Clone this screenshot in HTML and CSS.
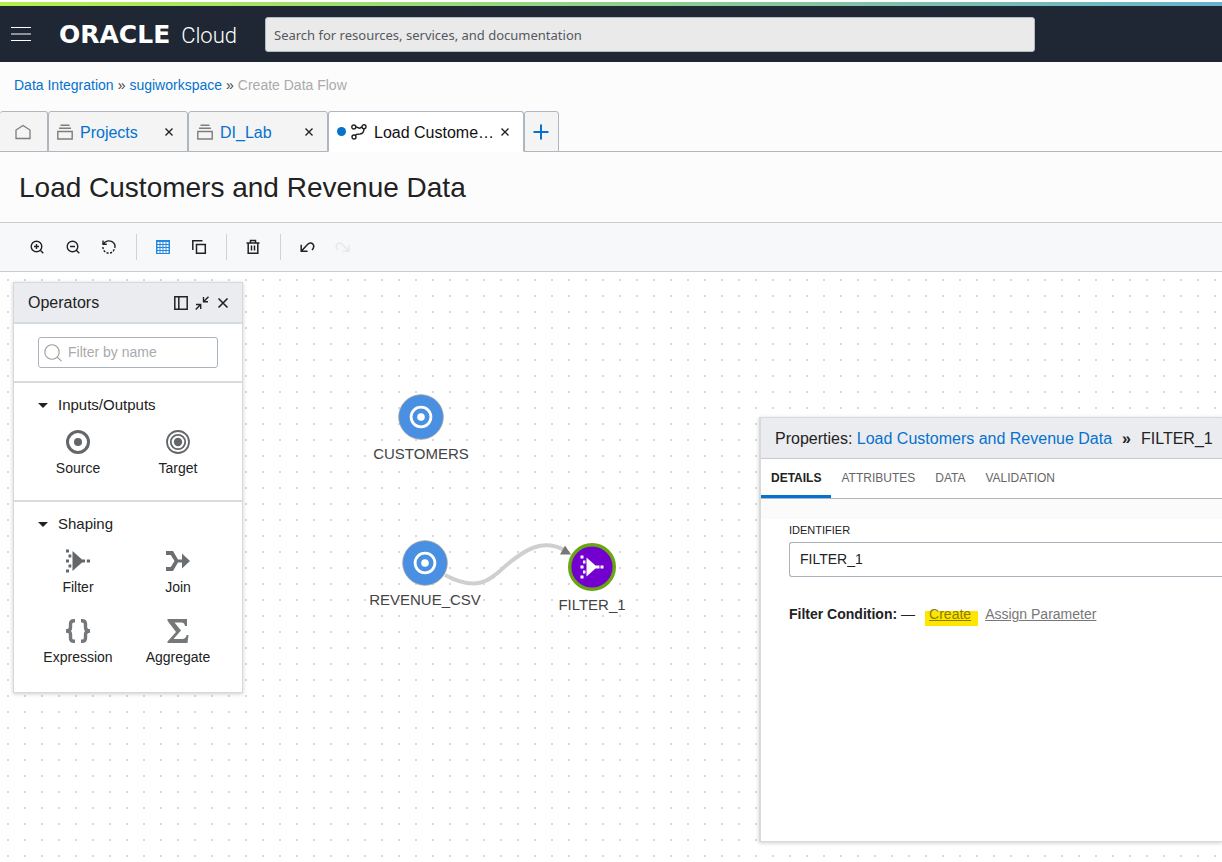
FILE: index.html
```html
<!DOCTYPE html>
<html lang="en">
<head>
<meta charset="UTF-8">
<meta name="viewport" content="width=device-width, initial-scale=1.0">
<title>Create Data Flow</title>
<link rel="stylesheet" href="styles.css">
</head>
<body>
  <header class="topbar">
    <button type="button" class="menu-button" aria-label="Menu"><span></span><span></span><span></span></button>
    <a href="#" class="brand"><span class="brand-name">ORACLE</span><span class="brand-product">Cloud</span></a>
    <input type="text" class="search" aria-label="Search" placeholder="Search for resources, services, and documentation">
  </header>

  <nav class="breadcrumb" aria-label="Breadcrumb">
    <a href="#">Data Integration</a><span class="sep">»</span><a href="#">sugiworkspace</a><span class="sep">»</span><span class="current">Create Data Flow</span>
  </nav>

  <div class="tabs">
    <button type="button" class="tab tab-home" aria-label="Home">
      <svg width="16" height="16" viewBox="0 0 16 16" fill="none" stroke="#7d7d7d" stroke-width="1.3"><path d="M1 14.5V6L8 1.5L15 6V14.5Z"/></svg>
    </button>
    <div class="tab">
      <svg width="16" height="16" viewBox="0 0 16 16" fill="none" stroke="#7d7d7d" stroke-width="1.4"><path d="M3.5 1.2h9M2 4.2h12M.8 7.5h14.4v7.5H.8z"/></svg>
      <a href="#">Projects</a>
      <button type="button" class="close" aria-label="Close Projects"><svg width="8" height="8" viewBox="0 0 8 8" stroke="#222" stroke-width="1.4"><path d="M.5.5l7 7M7.5.5l-7 7"/></svg></button>
    </div>
    <div class="tab">
      <svg width="16" height="16" viewBox="0 0 16 16" fill="none" stroke="#7d7d7d" stroke-width="1.4"><path d="M3.5 1.2h9M2 4.2h12M.8 7.5h14.4v7.5H.8z"/></svg>
      <a href="#">DI_Lab</a>
      <button type="button" class="close" aria-label="Close DI_Lab"><svg width="8" height="8" viewBox="0 0 8 8" stroke="#222" stroke-width="1.4"><path d="M.5.5l7 7M7.5.5l-7 7"/></svg></button>
    </div>
    <div class="tab tab-active">
      <span class="unsaved"></span>
      <svg width="16" height="16" viewBox="0 0 16 16" fill="none" stroke="#222" stroke-width="1.4"><circle cx="2.8" cy="3" r="2"/><circle cx="13" cy="2.8" r="2"/><circle cx="3" cy="13" r="2"/><path d="M4.8 3c2 0 2.4 1.2 3.6 1.2S9.600 3 11 3M13 4.8c0 3-1.5 5-4 5.200-2.5.1-4 .2-4.800 1.5"/></svg>
      <a href="#">Load Custome…</a>
      <button type="button" class="close" aria-label="Close Load Customers"><svg width="8" height="8" viewBox="0 0 8 8" stroke="#222" stroke-width="1.4"><path d="M.5.5l7 7M7.5.5l-7 7"/></svg></button>
    </div>
    <button type="button" class="tab tab-add" aria-label="New tab">
      <svg width="16" height="16" viewBox="0 0 16 16" stroke="#0572ce" stroke-width="2"><path d="M8 .5v15M.5 8h15"/></svg>
    </button>
  </div>

  <h1 class="page-title">Load Customers and Revenue Data</h1>

  <div class="toolbar">
    <button type="button" aria-label="Zoom in"><svg width="16" height="16" viewBox="0 0 16 16" fill="none" stroke="#222" stroke-width="1.4"><circle cx="7.5" cy="7.5" r="5.3"/><path d="M11.3 11.3l3 3M5 7.5h5M7.5 5v5"/></svg></button>
    <button type="button" aria-label="Zoom out"><svg width="16" height="16" viewBox="0 0 16 16" fill="none" stroke="#222" stroke-width="1.4"><circle cx="7.5" cy="7.5" r="5.3"/><path d="M11.3 11.3l3 3M5 7.5h5"/></svg></button>
    <button type="button" aria-label="Reset"><svg width="16" height="16" viewBox="0 0 16 16" fill="none" stroke="#222" stroke-width="1.4"><path d="M2 1.500v3.800h3.800M2.200 5.300C4 2 8 1 11 2.700c2.500 1.500 3.500 3.800 2.800 6.300"/><path d="M13.300 10.300C11.500 14 8 15 5 13.500 3.200 12.500 2 10.500 1.900 8" stroke-dasharray="2.2 1.4"/></svg></button>
    <span class="divider"></span>
    <button type="button" aria-label="Grid"><svg width="16" height="16" viewBox="0 0 16 16"><path fill="#2389dd" d="M1 1h14v14H1z"/><path stroke="#fff" stroke-width="2" stroke-dasharray="2 1" d="M2.500 4h11M2.500 7h11M2.500 10h11M2.500 13h11"/></svg></button>
    <button type="button" aria-label="Copy"><svg width="16" height="16" viewBox="0 0 16 16" fill="none" stroke="#222" stroke-width="1.5"><path d="M5.500 5.500h8.800v8.800H5.500zM1.800 11V1.800h9.700"/></svg></button>
    <span class="divider"></span>
    <button type="button" aria-label="Delete"><svg width="16" height="16" viewBox="0 0 16 16" fill="none" stroke="#222" stroke-width="1.5"><path d="M1.500 4h13M5.500 4V1.500h5V4M3.200 4v10.200h9.600V4M6.500 6.500v5M9.500 6.500v5"/></svg></button>
    <span class="divider"></span>
    <button type="button" aria-label="Undo"><svg width="16" height="16" viewBox="0 0 16 16" fill="none" stroke="#222" stroke-width="1.5"><path d="M2.200 5.800v6.400h6.400M2.500 12L8 6c2-2.300 4.500-2.500 6-.7 1.300 1.800 1 3.600-1 5.700"/></svg></button>
    <button type="button" aria-label="Redo" disabled><svg width="16" height="16" viewBox="0 0 16 16" fill="none" stroke="#e6e8ea" stroke-width="1.5"><path d="M13.800 5.800v6.400H7.400M13.500 12L8 6C6 3.700 3.500 3.500 2 5.300.7 7.100 1 8.900 3 11"/></svg></button>
  </div>

  <main class="canvas">
    <svg class="links" width="640" height="400" viewBox="0 0 640 400" fill="none">
      <path d="M445 303C482 323 494 303 509 291C524 279 542 266 564 278" stroke="#cfcfcf" stroke-width="4"/>
      <path d="M560 282.500L565 273.500L571 282.500Z" fill="#777"/>
    </svg>

    <div class="node node-customers">
      <svg width="46" height="46" viewBox="0 0 46 46"><circle cx="23" cy="23" r="22.3" fill="#4a90e2" stroke="#a0a0a0" stroke-width=".8"/><circle cx="23" cy="23" r="9.9" fill="none" stroke="#fff" stroke-width="2.8"/><circle cx="23" cy="23" r="3.8" fill="#fff"/></svg>
      <span>CUSTOMERS</span>
    </div>
    <div class="node node-revenue">
      <svg width="46" height="46" viewBox="0 0 46 46"><circle cx="23" cy="23" r="22.3" fill="#4a90e2" stroke="#a0a0a0" stroke-width=".8"/><circle cx="23" cy="23" r="9.9" fill="none" stroke="#fff" stroke-width="2.8"/><circle cx="23" cy="23" r="3.8" fill="#fff"/></svg>
      <span>REVENUE_CSV</span>
    </div>
    <div class="node node-filter">
      <svg width="48" height="48" viewBox="0 0 48 48"><circle cx="24" cy="24" r="22.3" fill="#7300cf" stroke="#68a612" stroke-width="3.4"/><path fill="#fff" d="M18.500 14.500l9 8h4v3h-4l-9 8zM12.500 12.500h3v3h-3zM12.500 22.500h3v3h-3zM12.500 32.500h3v3h-3zM15 17.500h2.500v3H15zM15 27.500h2.500v3H15zM32.500 22.500h3v3h-3z"/></svg>
      <span>FILTER_1</span>
    </div>

    <section class="operators">
      <div class="panel-header">
        <h2>Operators</h2>
        <button type="button" aria-label="Dock"><svg width="14" height="14" viewBox="0 0 14 14" fill="none" stroke="#222" stroke-width="1.5"><path d="M.8.8h12.400v12.400H.8zM4.800 1v12"/></svg></button>
        <button type="button" aria-label="Collapse"><svg width="14" height="14" viewBox="0 0 14 14" fill="none" stroke="#222" stroke-width="1.4"><path d="M8.500 1v4.700H13M9 5.200L13.500.7M1 8.500h4.700V13M5.200 9L.7 13.500"/></svg></button>
        <button type="button" aria-label="Close"><svg width="14" height="14" viewBox="0 0 14 14" stroke="#222" stroke-width="1.6"><path d="M2.500 2.500l9 9M11.500 2.500l-9 9"/></svg></button>
      </div>
      <div class="filter-section">
        <div class="filter-box">
          <svg width="18" height="18" viewBox="0 0 18 18" fill="none" stroke="#9a9a9a" stroke-width="1.1"><circle cx="8" cy="8" r="7.2"/><path d="M13.200 13.200l4.300 4"/></svg>
          <input type="text" aria-label="Filter by name" placeholder="Filter by name">
        </div>
      </div>
      <div class="group">
        <h3><button type="button"><span class="caret"></span>Inputs/Outputs</button></h3>
        <div class="items">
          <div class="item"><svg width="24" height="24" viewBox="0 0 24 24"><circle cx="12" cy="12" r="10.5" fill="none" stroke="#63676a" stroke-width="3"/><circle cx="12" cy="12" r="4" fill="#63676a"/></svg><span>Source</span></div>
          <div class="item"><svg width="24" height="24" viewBox="0 0 24 24"><g fill="none" stroke="#63676a" stroke-width="1.8"><circle cx="12" cy="12" r="11"/><circle cx="12" cy="12" r="7.2"/></g><circle cx="12" cy="12" r="4.2" fill="#63676a"/></svg><span>Target</span></div>
        </div>
      </div>
      <div class="group group-last">
        <h3><button type="button"><span class="caret"></span>Shaping</button></h3>
        <div class="items">
          <div class="item"><svg width="24" height="24" viewBox="0 0 24 24" fill="#63676a"><path d="M6.500 2l9.500 8.500h3v3h-3L6.500 22zM0 .5h3v3H0zM0 10.500h3v3H0zM0 20.500h3v3H0zM2.500 5.500h2.800v3H2.500zM2.500 15.500h2.800v3H2.500zM20.800 10.500H24v3h-3.200z"/></svg><span>Filter</span></div>
          <div class="item"><svg width="24" height="24" viewBox="0 0 24 24" fill="#6b6f72"><path d="M0 2h7l5 8.500h4V4.500l8 7.500-8 7.500v-6h-4L7 22H0v-4h4.800L8.500 12 4.800 6H0z"/></svg><span>Join</span></div>
          <div class="item"><svg width="24" height="24" viewBox="0 0 24 24" fill="none" stroke="#75787b" stroke-width="3.4"><path d="M9 1.700H8C5.200 1.700 4.500 3 4.500 5v3.500c0 2-1 3.500-4.500 3.500 3.500 0 4.500 1.500 4.500 3.500V19c0 2 .7 3.300 3.500 3.300h1M15 1.700h1c2.800 0 3.500 1.300 3.500 3.300v3.500c0 2 1 3.500 4.500 3.500-3.500 0-4.500 1.500-4.500 3.500V19c0 2-.7 3.300-3.500 3.300h-1"/></svg><span>Expression</span></div>
          <div class="item"><svg width="24" height="24" viewBox="0 0 24 24"><path fill="#75787b" d="M1.500 0h19.500v7h-2c-.5-2.500-1.500-3.500-4-3.500H8.500l6.500 8-7.500 8.500h8.500c3 0 4-1.500 4.700-4h1.800L21.500 24h-20v-1.500L10 13 1.500 1.800z"/></svg><span>Aggregate</span></div>
        </div>
      </div>
    </section>

    <section class="properties">
      <div class="properties-header">
        <span>Properties: <a href="#">Load Customers and Revenue Data</a></span><b>»</b><span>FILTER_1</span>
      </div>
      <div class="properties-tabs">
        <button type="button" class="selected">DETAILS</button>
        <button type="button">ATTRIBUTES</button>
        <button type="button">DATA</button>
        <button type="button">VALIDATION</button>
      </div>
      <div class="strip"></div>
      <div class="properties-body">
        <label for="identifier">IDENTIFIER</label>
        <input type="text" id="identifier" value="FILTER_1">
        <div class="condition">
          <strong>Filter Condition:</strong><span>—</span>
          <a href="#" class="create">Create</a>
          <a href="#">Assign Parameter</a>
        </div>
      </div>
    </section>
  </main>
</body>
</html>
```
FILE: styles.css
```css
* {
  box-sizing: border-box;
}
body {
  margin: 0;
  min-height: 100vh;
  display: flex;
  flex-direction: column;
  background-color: #fcfcfc;
  color: #222;
  font-family: "Liberation Sans", Arial, sans-serif;
  font-size: 14px;
  overflow-x: hidden;
}
button {
  font-family: inherit;
  padding: 0;
  border: none;
  background: none;
  color: inherit;
  cursor: pointer;
}
input {
  font-family: inherit;
  color: #222;
}
a {
  color: #0572ce;
  text-decoration: none;
}
svg {
  display: block;
  flex-shrink: 0;
}

/* top bar */
.topbar {
  display: flex;
  align-items: center;
  height: 62px;
  padding: 6px 0 0 11px;
  background: linear-gradient(90deg, #b6ee4a, #69b1cd) 0 2px / 100% 4px no-repeat,
    linear-gradient(#fff 2px, #1e2733 2px);
}
.menu-button {
  display: flex;
  flex-direction: column;
  justify-content: space-between;
  width: 20px;
  height: 14px;
}
.menu-button span {
  height: 1px;
  background-color: #fff;
}
.menu-button span:nth-child(2) {
  height: 2px;
  background-color: #8e9399;
}
.brand {
  display: flex;
  align-items: baseline;
  justify-content: space-between;
  width: 178px;
  margin: 0 28px;
  color: #fff;
}
.brand-name {
  font: bold 25px "DejaVu Sans", sans-serif;
}
.brand-product {
  font: 300 22px Roboto, sans-serif;
}
.search {
  width: 63vw;
  height: 35px;
  padding: 1px 8px 0;
  border: 1px solid #b4bac2;
  border-radius: 3px;
  background-color: #eaeaea;
  font: 13px "Noto Sans", sans-serif;
}
.search::placeholder {
  color: #55595e;
  opacity: 1;
}

.breadcrumb {
  height: 49px;
  padding: 0 14px;
  line-height: 47px;
}
.breadcrumb .sep {
  margin: 0 4px;
  color: #444;
}
.breadcrumb .current {
  color: #aaa;
}

/* workspace tabs */
.tabs {
  display: flex;
  height: 41px;
  box-shadow: inset 0 -1px #b0b6bf;
}
.tab {
  display: flex;
  align-items: center;
  width: 140px;
  padding: 0 14px 0 8px;
  border: 1px solid #b0b6bf;
  border-radius: 3px 3px 0 0;
  background-color: #f4f4f4;
  font-size: 16px;
}
.tab a {
  margin: 0 auto 0 7px;
  padding-top: 2px;
}
.tab-home {
  width: 48px;
  padding: 0 15px;
  border-left: none;
}
.tab-active {
  width: 196px;
  border-bottom-color: #fff;
  background-color: #fff;
}
.tab-active a {
  color: #111;
}
.unsaved {
  width: 9px;
  height: 9px;
  margin-right: 5px;
  border-radius: 50%;
  background-color: #0572ce;
}
.tab-add {
  width: 35px;
  padding: 0 8px;
}

.page-title {
  height: 70px;
  margin: 0;
  padding: 0 19px;
  font-size: 28px;
  font-weight: normal;
  line-height: 72px;
}

.toolbar {
  display: flex;
  align-items: center;
  height: 50px;
  padding: 0 29px;
  gap: 20px;
  border-top: 1px solid #ccc;
  border-bottom: 1px solid #ccc;
  background-color: #f7f8fa;
}
.toolbar .divider {
  width: 1px;
  height: 26px;
  margin: 0 -2px 0 -1px;
  background-color: #cdd3d8;
}

/* canvas */
.canvas {
  position: relative;
  flex: 1;
  min-height: 590px;
  overflow: hidden;
  background: conic-gradient(from 270deg at 2px 2px, #d9d9d9 90deg, transparent 0) 7px 7px / 17px 16px, #fff;
}
.links {
  position: absolute;
  left: 0;
  top: 0;
}
.node {
  position: absolute;
  display: flex;
  flex-direction: column;
  align-items: center;
  width: 120px;
  gap: 5px;
  color: #444;
  font-size: 15px;
  line-height: 18px;
}
.node-customers {
  left: 361px;
  top: 122px;
}
.node-revenue {
  left: 365px;
  top: 268px;
}
.node-filter {
  left: 532px;
  top: 271px;
}

.operators {
  position: absolute;
  left: 13px;
  top: 10px;
  width: 230px;
  border: 1px solid #d6d9dc;
  background-color: #fff;
  box-shadow: 0 1px 4px rgba(0, 0, 0, 0.2);
}
.panel-header {
  display: flex;
  align-items: center;
  height: 41px;
  padding: 0 12px 0 14px;
  gap: 7px;
  border-bottom: 2px solid #d6dbe0;
  background-color: #ebecf0;
}
.panel-header h2 {
  margin: 0 auto 0 0;
  font-size: 16px;
  font-weight: normal;
}
.filter-section {
  padding: 13px 24px;
  border-bottom: 2px solid #d6dbe0;
}
.filter-box {
  display: flex;
  align-items: center;
  height: 31px;
  padding: 0 5px;
  gap: 6px;
  border: 1px solid #aab2bb;
  border-radius: 3px;
}
.filter-box input {
  width: 100%;
  padding: 0 0 2px;
  border: none;
  background: none;
  font-size: 14px;
}
.filter-box input::placeholder {
  color: #aaa;
  opacity: 1;
}
.group {
  height: 119px;
  border-bottom: 2px solid #d6dbe0;
}
.group-last {
  height: 190px;
  border-bottom: none;
}
.group h3 {
  margin: 0;
  padding: 12px 24px 15px;
  font-weight: normal;
}
.group h3 button {
  display: flex;
  align-items: center;
  gap: 10px;
  font-size: 15px;
  line-height: 20px;
}
.caret {
  border: 5px solid transparent;
  border-top-color: #222;
  border-bottom: none;
}
.items {
  display: grid;
  grid-template-columns: 1fr 1fr;
  padding: 0 14px;
}
.item {
  display: flex;
  flex-direction: column;
  align-items: center;
  height: 70px;
  gap: 5px;
  line-height: 18px;
}

/* properties panel */
.properties {
  position: absolute;
  right: 0;
  top: 145px;
  bottom: 20px;
  width: 463px;
  border: 1px solid #d9d9d9;
  border-width: 1px 0 1px 2px;
  background-color: #fff;
  box-shadow: 0 1px 4px rgba(0, 0, 0, 0.2);
}
.properties-header {
  display: flex;
  align-items: center;
  height: 41px;
  padding: 2px 0 0 14px;
  gap: 10px;
  border-bottom: 1px solid #c8ccd2;
  background-color: #ebecf0;
  font-size: 16px;
  white-space: nowrap;
}
.properties-tabs {
  display: flex;
  height: 40px;
  border-bottom: 1px solid #b0b6bf;
}
.properties-tabs button {
  height: 39px;
  padding: 2px 10px 0;
  border-bottom: 3px solid transparent;
  color: #666;
  font-size: 12px;
}
.properties-tabs .selected {
  border-bottom-color: #0572ce;
  color: #222;
  font-weight: bold;
}
.strip {
  height: 20px;
  background-color: #fbfbfb;
}
.properties-body {
  padding-left: 28px;
}
.properties-body label {
  display: block;
  font-size: 11px;
  line-height: 23px;
}
.properties-body input {
  display: block;
  width: 100%;
  height: 35px;
  padding: 0 10px 2px;
  border: 1px solid #aab2bb;
  border-right: none;
  border-radius: 3px 0 0 3px;
  font-size: 14px;
}
.condition {
  display: flex;
  align-items: center;
  margin-top: 25px;
  line-height: 24px;
}
.condition span {
  margin: 0 10px 0 4px;
}
.condition a {
  color: #777;
  text-decoration: underline;
}
.condition .create {
  margin-right: 7px;
  padding: 0 7px 0 4px;
  background: linear-gradient(transparent 9px, #ffe600 9px);
  color: #8a7c00;
}
```
